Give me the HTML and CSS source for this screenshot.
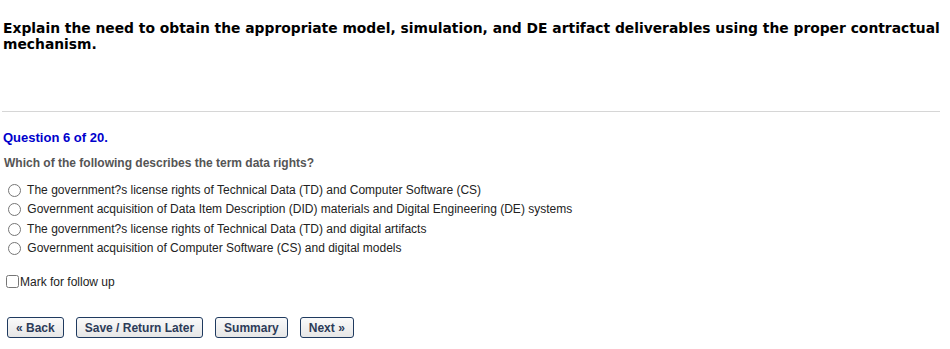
FILE: index.html
```html
<!DOCTYPE html>
<html>
<head>
    <title>Question 6 of 20</title>
    <link rel="stylesheet" href="styles.css">
</head>
<body>
    <div class="page">
        <h1 class="objective">Explain the need to obtain the appropriate model, simulation, and DE artifact deliverables using the proper contractual mechanism.</h1>
        <hr class="divider">

        <div class="question-count">Question 6 of 20.</div>
        <div class="question-text">Which of the following describes the term data rights?</div>

        <ul class="answers">
            <li><label><input type="radio" name="answer"> The government?s license rights of Technical Data (TD) and Computer Software (CS)</label></li>
            <li><label><input type="radio" name="answer"> Government acquisition of Data Item Description (DID) materials and Digital Engineering (DE) systems</label></li>
            <li><label><input type="radio" name="answer"> The government?s license rights of Technical Data (TD) and digital artifacts</label></li>
            <li><label><input type="radio" name="answer"> Government acquisition of Computer Software (CS) and digital models</label></li>
        </ul>

        <div class="follow-up">
            <label><input type="checkbox">Mark for follow up</label>
        </div>

        <div class="nav-buttons">
            <button>&laquo; Back</button>
            <button>Save / Return Later</button>
            <button>Summary</button>
            <button>Next &raquo;</button>
        </div>
    </div>
</body>
</html>
```

FILE: styles.css
```css
body {
    margin: 0;
    background-color: #fff;
    font-family: "Liberation Sans", Arial, sans-serif;
    font-size: 12px;
    color: #222;
}
.page {
    padding: 0 10px 0 3px;
}
.objective {
    font-family: "DejaVu Sans", Verdana, sans-serif;
    font-size: 13.85px;
    font-weight: bold;
    line-height: 16px;
    color: #000;
    margin: 0 -10px 0 0;
    padding-top: 20px;
}
.divider {
    border: none;
    border-top: 1px solid #d6d6d6;
    margin: 59px 0 0 -1px;
}
.question-count {
    margin-top: 18px;
    font-size: 13px;
    font-weight: bold;
    color: #0000cc;
}
.question-text {
    margin-top: 11px;
    padding-left: 1px;
    font-weight: bold;
    color: #555;
}
.answers {
    list-style: none;
    margin: 11px 0 0;
    padding: 0;
}
.answers li {
    height: 19.3px;
}
.answers input {
    margin: 3px 3px 0 5px;
    vertical-align: -3px;
}
.follow-up {
    margin-top: 17px;
}
.follow-up input {
    margin: 0 1px 0 3px;
    vertical-align: -2px;
}
.nav-buttons {
    display: flex;
    gap: 12px;
    margin-top: 28px;
    padding-left: 4px;
}
.nav-buttons button {
    height: 21px;
    padding: 0 8px;
    font-family: "Liberation Sans", Arial, sans-serif;
    font-size: 12px;
    font-weight: bold;
    color: #2c3b58;
    background: linear-gradient(#fafafa, #e6e6e6);
    border: 1px solid #1f3a5f;
    border-radius: 3px;
    cursor: pointer;
}
```
